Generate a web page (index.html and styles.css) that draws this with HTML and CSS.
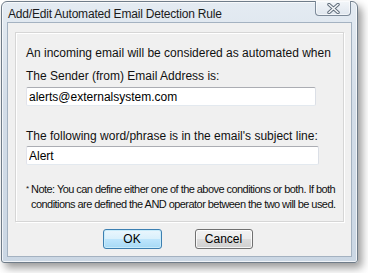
FILE: index.html
```html
<!DOCTYPE html>
<html lang="en">
<head>
  <meta charset="utf-8">
  <title>Add/Edit Automated Email Detection Rule</title>
  <link rel="stylesheet" href="styles.css">
</head>
<body>
  <div class="ventana">
    <div class="barra">
      <span class="titulo">Add/Edit Automated Email Detection Rule</span>
      <a href="#" class="cerrar">
        <svg width="13" height="11" viewBox="0 0 13 11">
          <path d="M2 1.5 L11 9.5 M11 1.5 L2 9.5" stroke="#5d6a78" stroke-width="3.4" stroke-linecap="round"/>
          <path d="M2 1.5 L11 9.5 M11 1.5 L2 9.5" stroke="#f4f6f8" stroke-width="1.6" stroke-linecap="round"/>
        </svg>
      </a>
    </div>
    <div class="cliente">
      <div class="grupo">
        <p class="linea">An incoming email will be considered as automated when</p>
        <label class="etiqueta">The Sender (from) Email Address is:</label>
        <input class="entrada" value="alerts@externalsystem.com">
        <label class="etiqueta segunda">The following word/phrase is in the email's subject line:</label>
        <input class="entrada ancha" value="Alert">
        <p class="nota"><span class="ast">*</span> Note: You can define either one of the above conditions or both. If both<br>&nbsp;&nbsp;conditions are defined the AND operator between the two will be used.</p>
      </div>
      <div class="botones">
        <a href="#" class="btn btn_ok">OK</a>
        <a href="#" class="btn">Cancel</a>
      </div>
    </div>
  </div>
</body>
</html>
```

FILE: styles.css
```css
*{
	margin: 0;
	padding: 0;
	box-sizing: border-box;
	font-family: "Liberation Sans", Arial, sans-serif;
	font-size: 12px;
}

body{
	background: #fff;
	width: 368px;
	height: 273px;
	overflow: hidden;
}

a{
	text-decoration: none;
	color: #000;
	display: inline-block;
}

.ventana{
	margin: 1px 0 0 1px;
	width: 357px;
	height: 262px;
	border: 1px solid #6f7c89;
	border-radius: 6px 6px 3px 3px;
	background: linear-gradient(#e4ebf2, #d3dde8 40%, #cbd7e4);
	box-shadow: 4px 5px 8px rgba(0,0,0,0.4), inset 0 0 0 1px rgba(255,255,255,0.7);
	display: flex;
	flex-direction: column;
}

.barra{
	height: 20px;
	flex-shrink: 0;
	display: flex;
	justify-content: space-between;
	align-items: flex-start;
}

.titulo{
	padding: 5px 0 0 6px;
	color: #1b1b1b;
	letter-spacing: -0.2px;
}

.cerrar{
	width: 36px;
	height: 15px;
	margin: -1px 6px 0 0;
	border: 1px solid #7c8a99;
	border-top: none;
	border-radius: 0 0 4px 4px;
	background: linear-gradient(#f3f6f9, #dfe6ee);
	box-shadow: inset 0 0 0 1px rgba(255,255,255,0.6);
	display: flex;
	align-items: center;
	justify-content: center;
}

.cliente{
	margin: 0 5px 5px 5px;
	flex: 1;
	border: 1px solid #a4b2c1;
	background: #f0f0f0;
	padding: 9px 7px 0 7px;
	display: flex;
	flex-direction: column;
}

.grupo{
	height: 190px;
	border: 1px solid #d6d6d6;
	box-shadow: inset 1px 1px 0 #fff, 1px 1px 0 #fff;
	padding: 13px 10px 0 10px;
	display: flex;
	flex-direction: column;
	align-items: flex-start;
}

.linea, .etiqueta{
	line-height: 14px;
	color: #111;
}

.etiqueta{
	margin-top: 9px;
}

.segunda{
	margin-top: 23px;
}

.entrada{
	margin-top: 4px;
	width: 290px;
	height: 19px;
	border: 1px solid #abadb3;
	border-color: #abadb3 #dbdfe6 #e3e9ef #e2e3ea;
	border-radius: 2px;
	background: #fff;
	padding: 0 2px;
	outline: none;
	color: #000;
}

.ancha{
	margin-top: 3px;
	width: 293px;
}

.nota{
	margin-top: 16px;
	font-size: 11px;
	letter-spacing: -0.55px;
	white-space: nowrap;
	line-height: 15px;
	color: #111;
}

.ast{
	font-size: 8px;
	vertical-align: 2px;
}

.botones{
	margin-top: 7px;
	display: flex;
	justify-content: center;
	gap: 33px;
	padding-right: 4px;
}

.btn{
	width: 58px;
	height: 20px;
	border: 1px solid #707070;
	border-radius: 3px;
	background: linear-gradient(#f2f2f2, #ebebeb 50%, #dddddd 50%, #cfcfcf);
	box-shadow: inset 0 0 0 1px rgba(255,255,255,0.8);
	display: flex;
	align-items: center;
	justify-content: center;
	font-size: 12px;
}

.btn_ok{
	width: 59px;
	border-color: #3c7fb1;
	background: linear-gradient(#eaf6fd, #d9f0fc 50%, #bee6fd 50%, #a7d9f5);
	box-shadow: inset 0 0 0 1px #c9ecfb;
}
```
